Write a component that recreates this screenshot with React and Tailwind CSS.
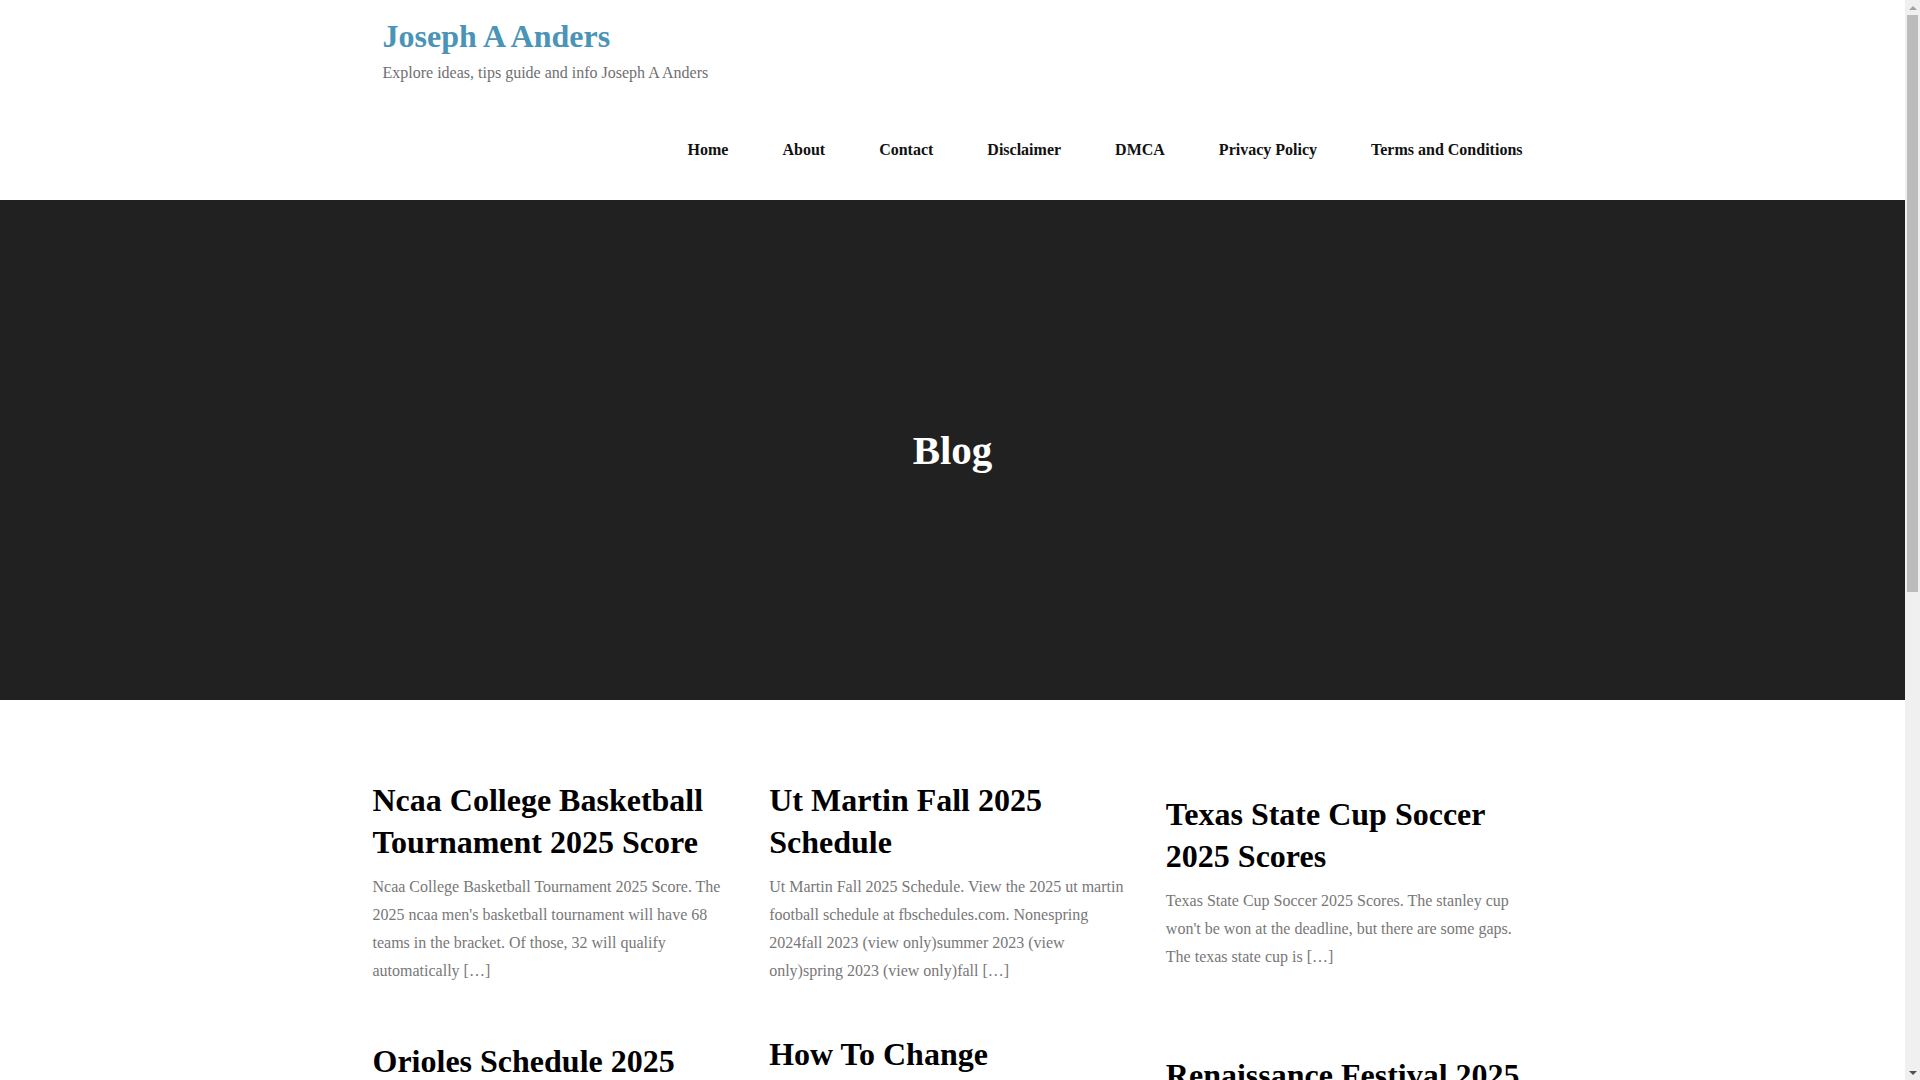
const navLinks = [
  "Home",
  "About",
  "Contact",
  "Disclaimer",
  "DMCA",
  "Privacy Policy",
  "Terms and Conditions",
];

const columns = [
  [
    {
      title: "Ncaa College Basketball Tournament 2025 Score",
      excerpt:
        "Ncaa College Basketball Tournament 2025 Score. The 2025 ncaa men's basketball tournament will have 68 teams in the bracket. Of those, 32 will qualify automatically […]",
      gap: "mt-0",
    },
    {
      title: "Orioles Schedule 2025 Printable",
      excerpt:
        "Orioles Schedule 2025 Printable. The official 2025 baltimore orioles schedule, including game times, opponents and printable calendar for every home and away […]",
      gap: "mt-[56px]",
    },
    {
      title: "Kentucky Derby 2025 Post Positions",
      excerpt:
        "Kentucky Derby 2025 Post Positions. The post position draw for the 151st running of the kentucky derby will be held on monday at churchill downs […]",
      gap: "mt-[56px]",
    },
  ],
  [
    {
      title: "Ut Martin Fall 2025 Schedule",
      excerpt:
        "Ut Martin Fall 2025 Schedule. View the 2025 ut martin football schedule at fbschedules.com. Nonespring 2024fall 2023 (view only)summer 2023 (view only)spring 2023 (view only)fall […]",
      gap: "mt-0",
    },
    {
      title: "How To Change Background In Teams",
      excerpt:
        "How To Change Background In Teams. Before or during a meeting, select more actions and then choose background effects to blur or replace your view […]",
      gap: "mt-[49px]",
    },
    {
      title: "Nfl Draft 2025 Mock First Round",
      excerpt:
        "Nfl Draft 2025 Mock First Round. Our latest projections for every pick of the opening round, with quarterbacks expected to go early […]",
      gap: "mt-[49px]",
    },
  ],
  [
    {
      title: "Texas State Cup Soccer 2025 Scores",
      excerpt:
        "Texas State Cup Soccer 2025 Scores. The stanley cup won't be won at the deadline, but there are some gaps. The texas state cup is […]",
      gap: "mt-[14px]",
    },
    {
      title: "Renaissance Festival 2025 Dates",
      excerpt:
        "Renaissance Festival 2025 Dates. Plan your visit with the full list of weekend dates, ticket prices and themed events for the upcoming festival season […]",
      gap: "mt-[84px]",
    },
    {
      title: "Masters 2025 Tee Times Today",
      excerpt:
        "Masters 2025 Tee Times Today. Here are the pairings and tee times for the final round at augusta national golf club […]",
      gap: "mt-[56px]",
    },
  ],
];

function Post({ post }) {
  return (
    <article className={post.gap}>
      <h2 className="text-[32px] leading-[41.6px] font-bold text-black">
        {post.title}
      </h2>
      <p className="mt-[10px] text-[16px] leading-[28px] text-[#777777]">
        {post.excerpt}
      </p>
    </article>
  );
}

// window scrollbar as it shows in the reference
function Scrollbar() {
  return (
    <div className="fixed top-0 right-0 h-screen w-[15px] bg-[#f0f0f0] flex flex-col items-center">
      <div className="h-[15px] flex items-center justify-center">
        <div className="w-0 h-0 border-l-[4px] border-r-[4px] border-b-[4px] border-l-transparent border-r-transparent border-b-[#a3a3a3]" />
      </div>
      <div className="w-[11px] h-[577px] bg-[#bcbcbc]" />
      <div className="flex-1" />
      <div className="h-[15px] flex items-center justify-center">
        <div className="w-0 h-0 border-l-[4px] border-r-[4px] border-t-[4px] border-l-transparent border-r-transparent border-t-[#505050]" />
      </div>
    </div>
  );
}

export default function App() {
  return (
    <div className="w-[1905px] min-h-screen bg-white font-['Liberation_Serif',serif]">
      {/* Header */}
      <header className="pt-[17px] pb-[38px]">
        <div className="w-[1140px] mx-auto">
          <h1 className="text-[32px] leading-[38px] font-bold text-[#4a94b7]">
            Joseph A Anders
          </h1>
          <p className="mt-[6px] text-[16px] leading-[24px] text-[#6f6f6f]">
            Explore ideas, tips guide and info Joseph A Anders
          </p>
          <nav className="mt-[53px] flex justify-end gap-[54px]">
            {navLinks.map((link) => (
              <a
                key={link}
                href="#"
                className="text-[16px] leading-[24px] font-bold text-[#111111]"
              >
                {link}
              </a>
            ))}
          </nav>
        </div>
      </header>

      {/* Hero */}
      <section className="h-[500px] bg-[#212121] flex items-center justify-center">
        <h1 className="text-[41px] leading-none font-bold text-white">Blog</h1>
      </section>

      {/* Posts */}
      <main className="w-[1160px] mx-auto pt-[80px] grid grid-cols-3 gap-x-[30px]">
        {columns.map((col, i) => (
          <div key={i} className="flex flex-col">
            {col.map((post) => (
              <Post key={post.title} post={post} />
            ))}
          </div>
        ))}
      </main>

      {/* Pagination */}
      <div className="w-[1140px] mx-auto mt-[70px] flex gap-[10px] text-[16px]">
        <span className="px-[14px] py-[6px] bg-[#212121] text-white">1</span>
        <a href="#" className="px-[14px] py-[6px] border border-[#dddddd] text-[#111111]">2</a>
        <a href="#" className="px-[14px] py-[6px] border border-[#dddddd] text-[#111111]">3</a>
        <a href="#" className="px-[14px] py-[6px] border border-[#dddddd] text-[#111111]">Next</a>
      </div>

      {/* Footer */}
      <footer className="mt-[80px] bg-[#212121] py-[40px]">
        <div className="w-[1140px] mx-auto text-[15px] text-[#bbbbbb]">
          Copyright © 2025 Joseph A Anders. All rights reserved.
        </div>
      </footer>

      <Scrollbar />
    </div>
  );
}
